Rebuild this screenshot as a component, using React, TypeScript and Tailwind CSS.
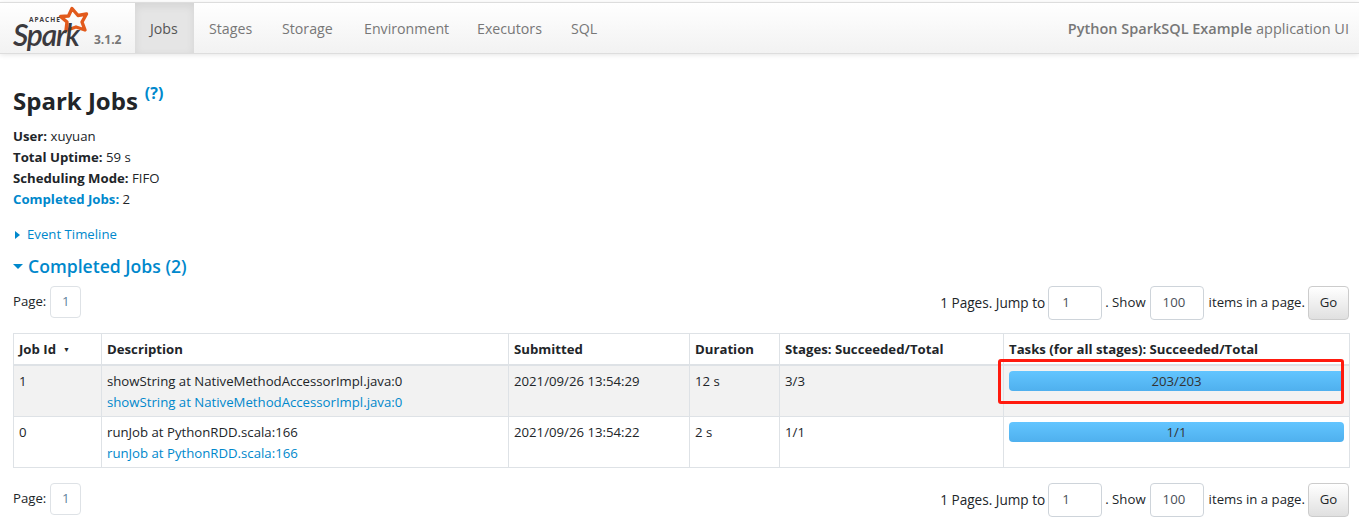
const font = { fontFamily: '"Open Sans", "Noto Sans", sans-serif' };

const tabs = [
  { label: "Jobs", w: "w-[59px]" },
  { label: "Stages", w: "w-[73px]" },
  { label: "Storage", w: "w-[82px]" },
  { label: "Environment", w: "w-[113px]" },
  { label: "Executors", w: "w-[94px]" },
  { label: "SQL", w: "w-[56px]" },
];

function SparkLogo() {
  return (
    <div className="relative w-[122px] h-[50px] shrink-0">
      <svg className="absolute left-[56px] top-[1px]" width="36" height="34" viewBox="56 3 36 34">
        <polygon
          points="72,7.5 78,14.5 86.5,13 82,21 85,29 76,26 66,29.5 67,21 60.5,15.5 68.5,15"
          fill="none"
          stroke="#e25a1c"
          strokeWidth="3.4"
          strokeLinejoin="round"
        />
      </svg>
      <span className="absolute left-[29px] top-[13px] text-[6.5px] leading-[7px] font-bold tracking-[1px] text-[#3c3a3e]">
        APACHE
      </span>
      <span
        className="absolute left-[13px] top-[20px] text-[30px] leading-[22px] font-semibold italic tracking-[-1.2px] text-[#3c3a3e]"
        style={{ fontFamily: "Lato, sans-serif" }}
      >
        Spark
      </span>
      <span className="absolute left-[94px] top-[29px] text-[12px] leading-[16px] font-bold text-[#777777]">
        3.1.2
      </span>
    </div>
  );
}

function NavBar() {
  return (
    <nav className="mt-[2px] h-[52px] flex items-stretch justify-between bg-gradient-to-b from-white to-[#f2f2f2] border-t border-b border-[#dddddd] shadow-[0_1px_5px_rgba(0,0,0,0.1)]">
      <div className="flex items-stretch">
        <SparkLogo />
        <div className="flex ml-[13px]">
          {tabs.map((t, i) => (
            <a
              key={t.label}
              className={
                i === 0
                  ? `${t.w} pl-[15px] pt-[1px] flex items-center text-[14.2px] text-[#555555] bg-[#e5e5e5] shadow-[inset_0_3px_8px_rgba(0,0,0,0.08)]`
                  : `${t.w} pl-[15px] pt-[1px] flex items-center text-[14.2px] text-[#777777]`
              }
            >
              {t.label}
            </a>
          ))}
        </div>
      </div>
      <div className="flex items-center pr-[10px] pt-[1px] text-[14.5px] text-[#777777]">
        <strong className="font-semibold">Python SparkSQL Example</strong>
        <span className="ml-[4px]">application UI</span>
      </div>
    </nav>
  );
}

function Pager() {
  return (
    <div className="flex items-start justify-between h-[34px] text-[13.2px] text-[#212529]">
      <div className="flex items-center h-[32px]">
        <span className="mr-[4px]">Page:</span>
        <span className="w-[31px] h-[32px] flex items-center justify-center border border-[#dee2e6] rounded-[4px] text-[#5f7f9c] bg-white">
          1
        </span>
      </div>
      <div className="flex items-center h-[34px]">
        <span className="mr-[3px] text-[13.6px]">1 Pages. Jump to</span>
        <span className="w-[54px] h-[34px] flex items-center pl-[13px] border border-[#ced4da] rounded-[4px] text-[#495057]">
          1
        </span>
        <span className="ml-[3px] mr-[4px]">. Show</span>
        <span className="w-[54px] h-[34px] flex items-center pl-[12px] border border-[#ced4da] rounded-[4px] text-[#495057]">
          100
        </span>
        <span className="ml-[5px] mr-[3px]">items in a page.</span>
        <span className="w-[41px] h-[34px] flex items-center justify-center border border-[#cccccc] rounded-[4px] bg-gradient-to-b from-white to-[#e0e0e0]">
          Go
        </span>
      </div>
    </div>
  );
}

const headers = [
  { label: "Job Id", w: "w-[88px]" },
  { label: "Description", w: "w-[407px]" },
  { label: "Submitted", w: "w-[181px]" },
  { label: "Duration", w: "w-[90px]" },
  { label: "Stages: Succeeded/Total", w: "w-[224px]" },
  { label: "Tasks (for all stages): Succeeded/Total", w: "w-[346px]" },
];

const rows = [
  {
    id: "1",
    desc: "showString at NativeMethodAccessorImpl.java:0",
    submitted: "2021/09/26 13:54:29",
    duration: "12 s",
    stages: "3/3",
    tasks: "203/203",
    cls: "bg-[#f2f2f2] h-[52px]",
  },
  {
    id: "0",
    desc: "runJob at PythonRDD.scala:166",
    submitted: "2021/09/26 13:54:22",
    duration: "2 s",
    stages: "1/1",
    tasks: "1/1",
    cls: "bg-white h-[51px]",
  },
];

const cell = "border border-[#dee2e6] px-[5px] pt-[5px] align-top leading-[21px]";

function JobsTable() {
  return (
    <table className="w-[1336px] table-fixed border-collapse text-[13.2px] text-[#212529]">
      <thead>
        <tr className="h-[31px]">
          {headers.map((h, i) => (
            <th
              key={h.label}
              className={`${h.w} border border-[#dee2e6] border-b-2 px-[5px] pt-[2px] text-left font-bold align-middle`}
            >
              {h.label}
              {i === 0 && <span className="ml-[7px] text-[7px] align-[2px]">▼</span>}
            </th>
          ))}
        </tr>
      </thead>
      <tbody>
        {rows.map((r) => (
          <tr key={r.id} className={r.cls}>
            <td className={cell}>{r.id}</td>
            <td className={cell}>
              <div>{r.desc}</div>
              <div className="text-[#0088cc]">{r.desc}</div>
            </td>
            <td className={cell}>{r.submitted}</td>
            <td className={cell}>{r.duration}</td>
            <td className={cell}>{r.stages}</td>
            <td className={cell}>
              <div className="h-[20px] pt-[1px] rounded-[4px] bg-gradient-to-b from-[#62c5ff] to-[#4fb0ee] flex items-center justify-center text-[#333333]">
                {r.tasks}
              </div>
            </td>
          </tr>
        ))}
      </tbody>
    </table>
  );
}

export default function App() {
  return (
    <div className="relative w-[1359px] h-[528px] overflow-hidden bg-white" style={font}>
      <NavBar />
      <main className="pl-[13px] pr-[10px]">
        <h3 className="mt-[29px] h-[36px] flex items-center text-[24px] font-bold text-[#212529]">
          Spark Jobs
          <sup className="ml-[7px] text-[16px] font-bold text-[#0088cc]">(?)</sup>
        </h3>
        <ul className="mt-[7px] text-[13.2px] leading-[21px] text-[#212529]">
          <li><strong>User:</strong> xuyuan</li>
          <li><strong>Total Uptime:</strong> 59 s</li>
          <li><strong>Scheduling Mode:</strong> FIFO</li>
          <li><strong className="text-[#0088cc]">Completed Jobs:</strong> 2</li>
        </ul>
        <div className="mt-[14px] h-[21px] flex items-center text-[13.2px] text-[#0088cc]">
          <span className="w-0 h-0 ml-[2px] mr-[7px] border-y-[4.5px] border-y-transparent border-l-[5px] border-l-[#0088cc]" />
          Event Timeline
        </div>
        <h4 className="mt-[9px] h-[24px] flex items-center text-[17.6px] font-semibold text-[#0088cc]">
          <span className="w-0 h-0 mr-[5px] border-x-[5px] border-x-transparent border-t-[5px] border-t-[#0088cc]" />
          Completed Jobs (2)
        </h4>
        <div className="mt-[8px]"><Pager /></div>
        <div className="mt-[13px]"><JobsTable /></div>
        <div className="mt-[15px]"><Pager /></div>
      </main>
      {/* annotation drawn over the screenshot */}
      <div className="absolute left-[998px] top-[359px] w-[346px] h-[45px] border-[3px] border-[#ff1a0e] rounded-[3px]" />
    </div>
  );
}
